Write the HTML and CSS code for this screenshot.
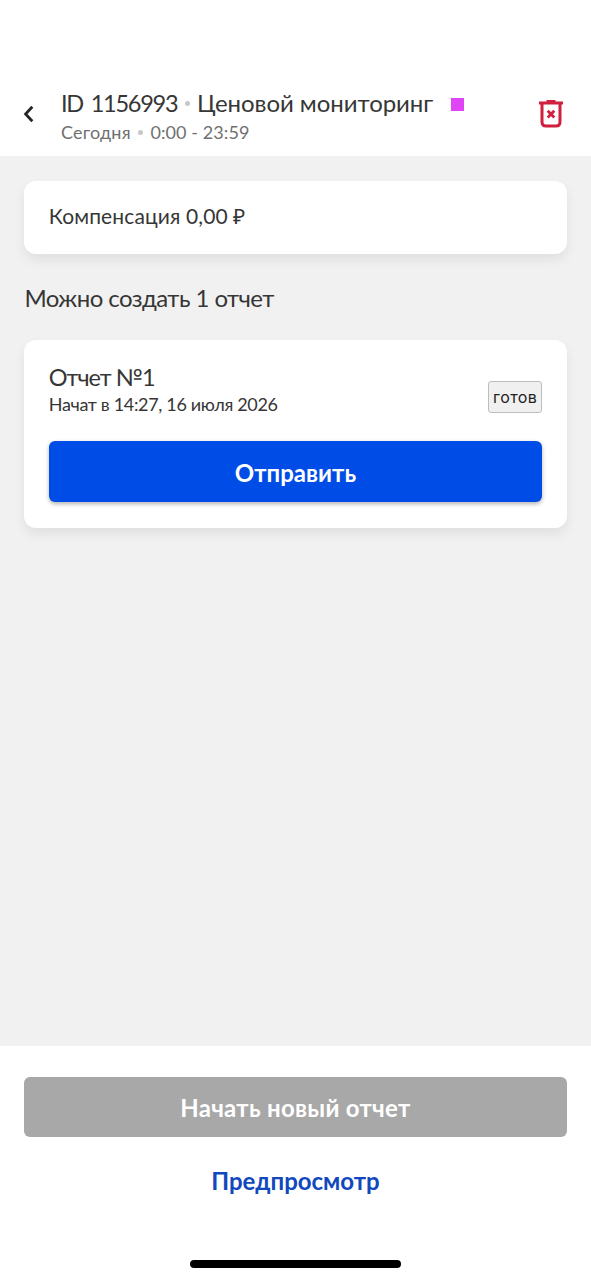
FILE: index.html
```html
<!DOCTYPE html>
<html lang="ru">
<head>
<meta charset="utf-8">
<title>Ценовой мониторинг</title>
<link rel="stylesheet" href="styles.css">
</head>
<body>
<div class="screen">
  <header class="header">
    <svg class="back" viewBox="0 0 12 18" aria-label="Назад"><path d="M9.3 1.800 2.600 9l6.700 7.200"/></svg>
    <div class="heading">
      <div class="title"><span class="title-id">ID 1156993</span><i class="dot"></i><span class="title-name">Ценовой мониторинг</span><i class="tag"></i></div>
      <div class="subtitle"><span class="day">Сегодня</span><i class="dot"></i><span class="hours">0:00 - 23:59</span></div>
    </div>
    <svg class="trash" viewBox="0 0 26 30" aria-label="Удалить"><path class="lid" d="M1 4h24M8.500 2.400h9"/><path class="can" d="M4 4.500V23q0 4 4 4h10q4 0 4-4V4.500"/><path class="cross" d="m9.700 11.800 6.600 6.600m0-6.600-6.600 6.600"/></svg>
  </header>
  <main class="content">
    <section class="card pay">Компенсация 0,00 ₽</section>
    <h2 class="section-title">Можно создать 1 отчет</h2>
    <section class="card report">
      <div class="report-top">
        <div>
          <div class="report-name">Отчет №1</div>
          <div class="report-date">Начат в 14:27, 16 июля 2026</div>
        </div>
        <div class="status">готов</div>
      </div>
      <button class="button send">Отправить</button>
    </section>
  </main>
  <footer class="footer">
    <button class="button start">Начать новый отчет</button>
    <a class="preview">Предпросмотр</a>
    <div class="home"></div>
  </footer>
</div>
</body>
</html>
```
FILE: styles.css
```css
* { box-sizing: border-box; }
body { margin: 0; font-family: Lato, "Open Sans", sans-serif; color: #363636; }
.screen { height: 1280px; display: flex; flex-direction: column; background: #f1f1f1; }
.header { height: 156px; padding: 88px 27px 0 22px; background: #fff; display: flex; align-items: flex-start; }
.back { width: 12px; height: 18px; margin: 17px 26px 0 1px; fill: none; stroke: #262626; stroke-width: 2.8; }
.heading { flex: 1; }
.title { height: 30px; font-size: 24px; line-height: 30px; display: flex; align-items: center; white-space: nowrap; }
.title-id { width: 116px; font-size: 23.5px; letter-spacing: -1.25px; word-spacing: 3px; }
.title-name { letter-spacing: -.05px; }
.subtitle { height: 28px; font-size: 18px; line-height: 28px; display: flex; align-items: center; color: #707070; }
.day { width: 69.500px; letter-spacing: .2px; }
.hours { letter-spacing: .08px; }
.dot { width: 5px; height: 5px; margin: 0 7.500px; border-radius: 50%; background: #c8c8c8; }
.tag { width: 13px; height: 13px; margin: 3px 0 0 17.500px; background: #df45f5; }
.trash { width: 26px; height: 30px; margin-top: 11px; fill: none; stroke: #d01f3f; }
.lid, .can { stroke-width: 3; }
.cross { stroke-width: 2.8; }
.content { flex: 1; padding: 24.500px 24.500px 0 24.400px; }
.card { background: #fff; border-radius: 12px; box-shadow: 0 6px 12px rgba(0,0,0,.07); padding: 23px 24.400px; }
.pay { height: 73px; font-size: 21px; line-height: 24px; letter-spacing: .13px; }
.section-title { margin: 28px 0 27px; height: 31px; font-size: 24px; line-height: 31px; font-weight: 400; letter-spacing: -.55px; }
.report { height: 188px; }
.report-top { display: flex; justify-content: space-between; height: 78.500px; }
.report-name { font-size: 23.5px; line-height: 28px; letter-spacing: -1px; }
.report-date { font-size: 18px; line-height: 26px; letter-spacing: -.34px; }
.status { width: 54px; height: 32px; margin-top: 18px; border: 1px solid #bdbdbd; border-radius: 3px; background: #f0f0f0; color: #222; font: 16px/30px Inter, sans-serif; letter-spacing: .4px; text-align: center; white-space: nowrap; }
.button { display: block; width: 100%; height: 60.500px; border: 0; border-radius: 6px; padding: 0; color: #fff; font: 700 24px/62px Lato, "Open Sans", sans-serif; text-align: center; }
.send { background: #004ce6; box-shadow: 0 2px 4px rgba(0,0,0,.3); line-height: 63px; }
.start { background: #a8a8a8; letter-spacing: .28px; }
.footer { height: 234px; padding: 30.500px 24.500px 0 24.400px; background: #fff; }
.preview { display: block; height: 30px; margin-top: 29px; font-size: 24px; line-height: 30px; font-weight: 700; color: #1148bd; text-align: center; }
.home { width: 211px; height: 8px; margin: 64px auto 0; border-radius: 4px; background: #000; }
```
